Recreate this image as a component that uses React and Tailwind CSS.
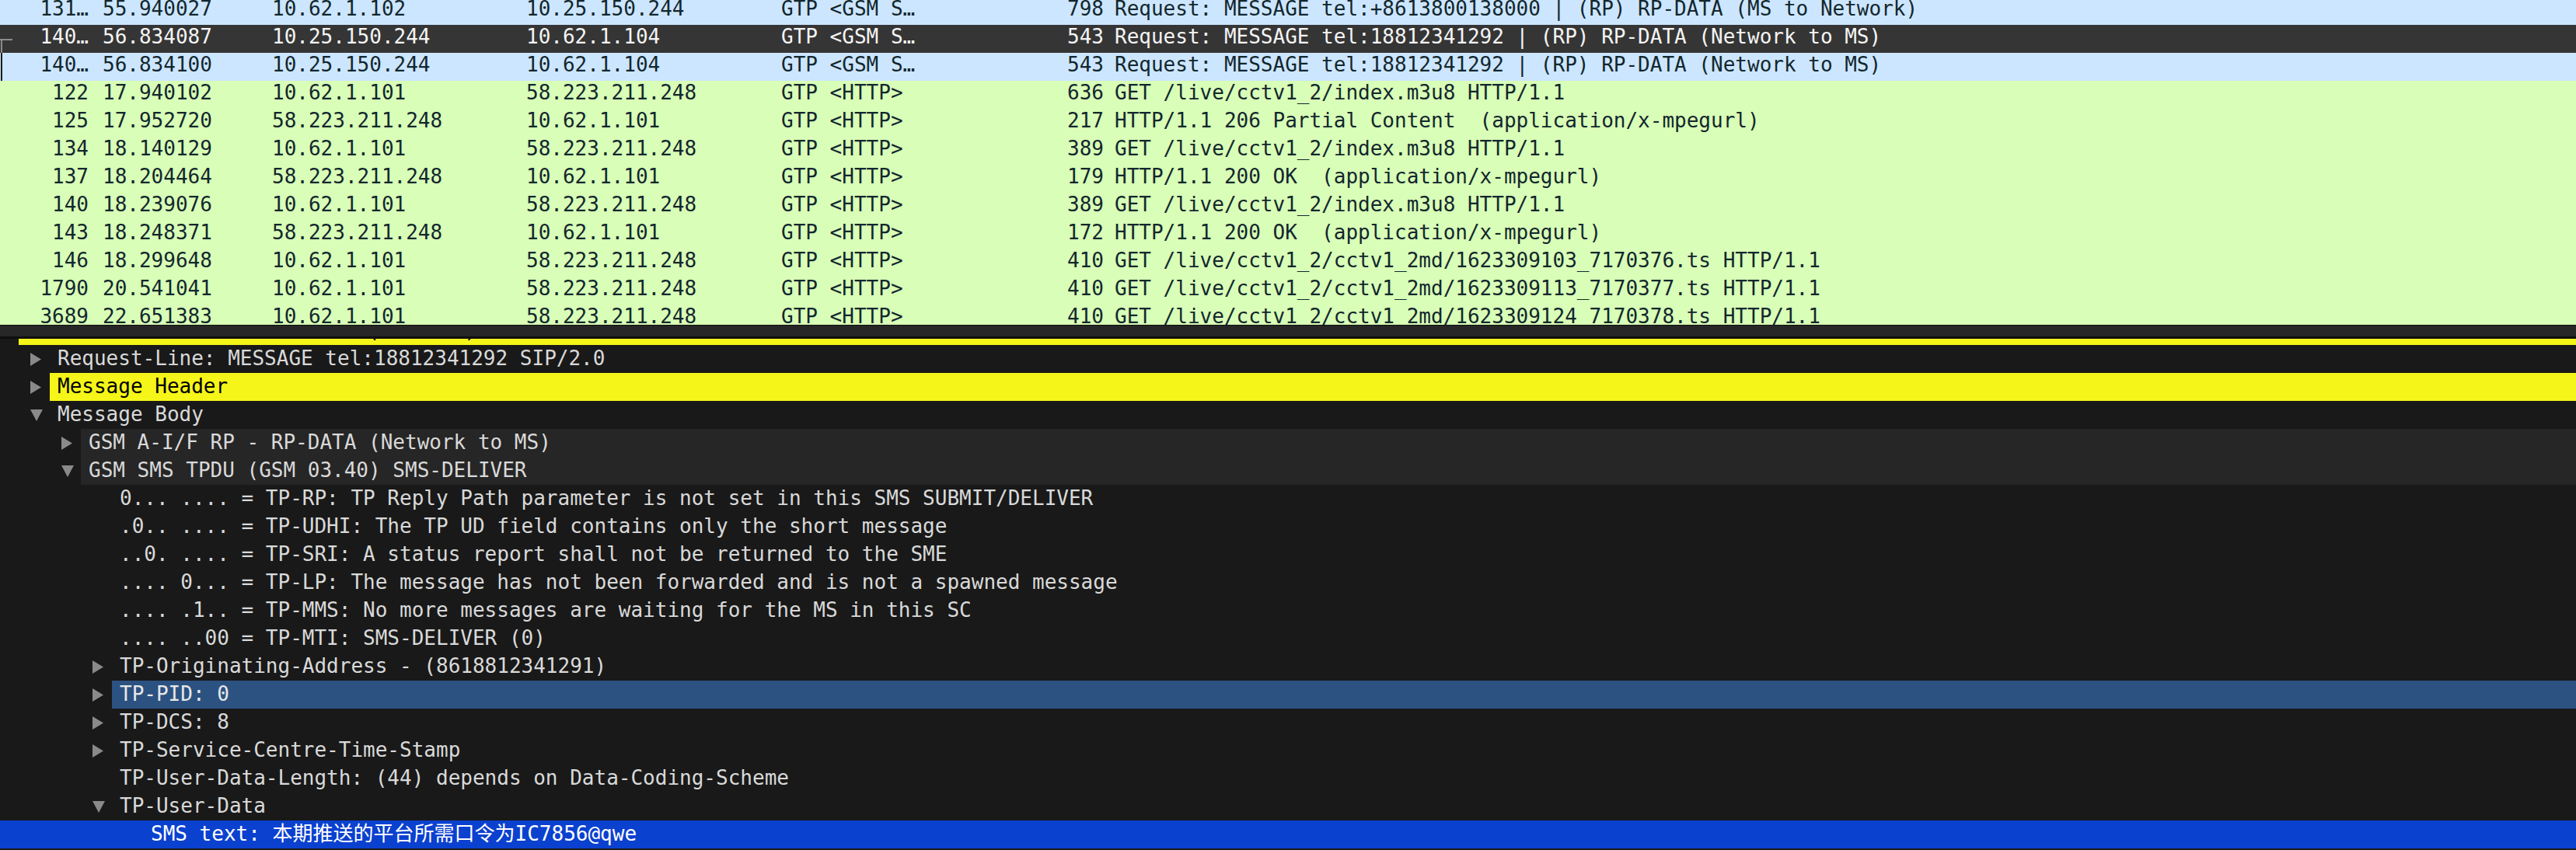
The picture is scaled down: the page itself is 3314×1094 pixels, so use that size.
import React from 'react';

const packets = [
  { no: '131…', time: '55.940027', src: '10.62.1.102', dst: '10.25.150.244', proto: 'GTP <GSM S…', len: '798', info: 'Request: MESSAGE tel:+8613800138000 | (RP) RP-DATA (MS to Network)', kind: 'sip' },
  { no: '140…', time: '56.834087', src: '10.25.150.244', dst: '10.62.1.104', proto: 'GTP <GSM S…', len: '543', info: 'Request: MESSAGE tel:18812341292 | (RP) RP-DATA (Network to MS)', kind: 'selected' },
  { no: '140…', time: '56.834100', src: '10.25.150.244', dst: '10.62.1.104', proto: 'GTP <GSM S…', len: '543', info: 'Request: MESSAGE tel:18812341292 | (RP) RP-DATA (Network to MS)', kind: 'sip', related: true },
  { no: '122', time: '17.940102', src: '10.62.1.101', dst: '58.223.211.248', proto: 'GTP <HTTP>', len: '636', info: 'GET /live/cctv1_2/index.m3u8 HTTP/1.1', kind: 'http' },
  { no: '125', time: '17.952720', src: '58.223.211.248', dst: '10.62.1.101', proto: 'GTP <HTTP>', len: '217', info: 'HTTP/1.1 206 Partial Content  (application/x-mpegurl)', kind: 'http' },
  { no: '134', time: '18.140129', src: '10.62.1.101', dst: '58.223.211.248', proto: 'GTP <HTTP>', len: '389', info: 'GET /live/cctv1_2/index.m3u8 HTTP/1.1', kind: 'http' },
  { no: '137', time: '18.204464', src: '58.223.211.248', dst: '10.62.1.101', proto: 'GTP <HTTP>', len: '179', info: 'HTTP/1.1 200 OK  (application/x-mpegurl)', kind: 'http' },
  { no: '140', time: '18.239076', src: '10.62.1.101', dst: '58.223.211.248', proto: 'GTP <HTTP>', len: '389', info: 'GET /live/cctv1_2/index.m3u8 HTTP/1.1', kind: 'http' },
  { no: '143', time: '18.248371', src: '58.223.211.248', dst: '10.62.1.101', proto: 'GTP <HTTP>', len: '172', info: 'HTTP/1.1 200 OK  (application/x-mpegurl)', kind: 'http' },
  { no: '146', time: '18.299648', src: '10.62.1.101', dst: '58.223.211.248', proto: 'GTP <HTTP>', len: '410', info: 'GET /live/cctv1_2/cctv1_2md/1623309103_7170376.ts HTTP/1.1', kind: 'http' },
  { no: '1790', time: '20.541041', src: '10.62.1.101', dst: '58.223.211.248', proto: 'GTP <HTTP>', len: '410', info: 'GET /live/cctv1_2/cctv1_2md/1623309113_7170377.ts HTTP/1.1', kind: 'http' },
  { no: '3689', time: '22.651383', src: '10.62.1.101', dst: '58.223.211.248', proto: 'GTP <HTTP>', len: '410', info: 'GET /live/cctv1_2/cctv1_2md/1623309124_7170378.ts HTTP/1.1', kind: 'http' },
];

const rowColors = {
  sip: 'bg-[#cde6ff] text-[#12272e]',
  selected: 'bg-[#353535] text-[#f4f4f4]',
  http: 'bg-[#d9feb7] text-[#12272e]',
};

// tree rows of the details pane
const details = [
  { level: 0, arrow: 'right', text: 'Session Initiation Protocol (MESSAGE)', hl: 'yellow' },
  { level: 1, arrow: 'right', text: 'Request-Line: MESSAGE tel:18812341292 SIP/2.0' },
  { level: 1, arrow: 'right', text: 'Message Header', hl: 'yellow' },
  { level: 1, arrow: 'down', text: 'Message Body' },
  { level: 2, arrow: 'right', text: 'GSM A-I/F RP - RP-DATA (Network to MS)', hl: 'branch' },
  { level: 2, arrow: 'down', text: 'GSM SMS TPDU (GSM 03.40) SMS-DELIVER', hl: 'branch' },
  { level: 3, text: '0... .... = TP-RP: TP Reply Path parameter is not set in this SMS SUBMIT/DELIVER' },
  { level: 3, text: '.0.. .... = TP-UDHI: The TP UD field contains only the short message' },
  { level: 3, text: '..0. .... = TP-SRI: A status report shall not be returned to the SME' },
  { level: 3, text: '.... 0... = TP-LP: The message has not been forwarded and is not a spawned message' },
  { level: 3, text: '.... .1.. = TP-MMS: No more messages are waiting for the MS in this SC' },
  { level: 3, text: '.... ..00 = TP-MTI: SMS-DELIVER (0)' },
  { level: 3, arrow: 'right', text: 'TP-Originating-Address - (8618812341291)' },
  { level: 3, arrow: 'right', text: 'TP-PID: 0', hl: 'blue' },
  { level: 3, arrow: 'right', text: 'TP-DCS: 8' },
  { level: 3, arrow: 'right', text: 'TP-Service-Centre-Time-Stamp' },
  { level: 3, text: 'TP-User-Data-Length: (44) depends on Data-Coding-Scheme' },
  { level: 3, arrow: 'down', text: 'TP-User-Data' },
  { level: 4, text: 'SMS text: 本期推送的平台所需口令为IC7856@qwe', hl: 'selected' },
];

const indent = {
  0: '-ml-[16px]',
  1: 'ml-[24px]',
  2: 'ml-[64px]',
  3: 'ml-[104px]',
  4: 'ml-[144px]',
};

const hlClass = {
  yellow: 'bg-[#f5f519] text-[#000000]',
  branch: 'bg-[#262626]',
  blue: 'bg-[#2c5282] text-[#e8e8e8]',
};

const Arrow = ({ dir }) =>
  dir === 'down' ? (
    <svg width="16" height="15" viewBox="0 0 16 15" className="block">
      <polygon points="0,0 16,0 8,15" fill="#8a8a8a" />
    </svg>
  ) : (
    <svg width="14" height="17" viewBox="0 0 14 17" className="block">
      <polygon points="0,0 14,8.5 0,17" fill="#8a8a8a" />
    </svg>
  );

const PacketRow = ({ p }) => (
  <div className={`relative flex h-[36px] items-start whitespace-pre leading-[30px] ${rowColors[p.kind]}`}>
    {p.kind === 'selected' && (
      <>
        <div className="absolute left-0 top-[18px] h-[2px] w-[16px] bg-[#8c8c8c]" />
        <div className="absolute left-[1px] top-[18px] bottom-0 w-[2px] bg-[#8c8c8c]" />
      </>
    )}
    {p.related && <div className="absolute left-[1px] top-0 bottom-0 w-[2px] bg-[#1b1b1b]" />}
    <div className="w-[114px] shrink-0 text-right">{p.no}</div>
    <div className="ml-[18px] w-[218px] shrink-0">{p.time}</div>
    <div className="w-[327px] shrink-0">{p.src}</div>
    <div className="w-[328px] shrink-0">{p.dst}</div>
    <div className="w-[300px] shrink-0">{p.proto}</div>
    <div className="w-[115px] shrink-0 text-right">{p.len}</div>
    <div className="ml-[14px] flex-1">{p.info}</div>
  </div>
);

const DetailRow = ({ d }) => {
  if (d.hl === 'selected') {
    return (
      <div className="flex h-[36px] items-start bg-[#0b41cf] leading-[34px] text-white whitespace-pre">
        <span className="pl-[194px]">{d.text}</span>
      </div>
    );
  }
  return (
    <div className="flex h-[36px] items-stretch whitespace-pre">
      <div className={`flex w-[40px] shrink-0 items-center pl-[15px] ${indent[d.level]}`}>
        {d.arrow && <Arrow dir={d.arrow} />}
      </div>
      <div className={`flex flex-1 items-start pl-[10px] leading-[34px] ${d.hl ? hlClass[d.hl] : ''}`}>{d.text}</div>
    </div>
  );
};

export default function App() {
  return (
    <div
      className="flex h-[1094px] w-[3314px] flex-col overflow-hidden bg-[#191919] text-[26px] leading-[36px]"
      style={{ fontFamily: '"DejaVu Sans Mono", "Noto Sans CJK SC", monospace' }}
    >
      {/* packet list */}
      <div className="h-[418px] shrink-0 overflow-hidden bg-[#d9feb7]">
        <div className="-mt-[4px]">
          {packets.map((p, i) => (
            <PacketRow key={i} p={p} />
          ))}
        </div>
      </div>

      {/* splitter */}
      <div className="h-[18px] shrink-0 border-t border-b-[3px] border-[#0f0f0f] bg-[#272727]" />

      {/* packet details */}
      <div className="flex-1 overflow-hidden bg-[#191919] text-[#d9d9d9]">
        <div className="-mt-[28px]">
          {details.map((d, i) => (
            <DetailRow key={i} d={d} />
          ))}
        </div>
      </div>
    </div>
  );
}
